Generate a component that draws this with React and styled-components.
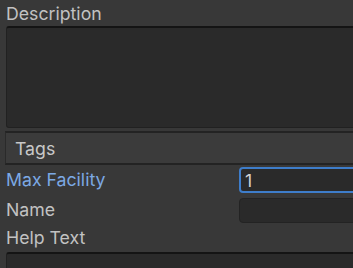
import React from "react";
import styled, { createGlobalStyle } from "styled-components";

const GlobalStyle = createGlobalStyle`
  html, body {
    margin: 0;
    padding: 0;
    background: #383838;
    overflow: hidden;
  }
  body {
    font-family: Inter, "Noto Sans", sans-serif;
  }
`;

const Panel = styled.div`
  width: 353px;
  height: 268px;
  padding: 4px 0 0 6px;
  box-sizing: border-box;
  background: #383838;
  display: flex;
  flex-direction: column;
  overflow: hidden;

  & > * {
    flex-shrink: 0;
  }
`;

const Label = styled.div`
  font-size: 17.7px;
  line-height: 20px;
  color: ${(p) => (p.$active ? "#7ca9e4" : "#c2c2c2")};
  white-space: nowrap;
`;

const TextArea = styled.div`
  margin-top: 2px;
  margin-right: -10px;
  height: ${(p) => p.$h}px;
  background: #2a2a2a;
  border: 1px solid #212121;
  border-top: 2px solid #141414;
  border-radius: 3px;
  box-sizing: border-box;
`;

const Foldout = styled.div`
  margin: 3px -10px 0 -1px;
  height: 34px;
  display: flex;
  align-items: center;
  padding-left: 9px;
  background: #3b3b3b;
  border-top: 2px solid #232323;
  border-bottom: 2px solid #232323;
  border-left: 1px solid #2a2a2a;
  box-sizing: border-box;
  font-size: 17.7px;
  color: #c8c8c8;
`;

const Row = styled.div`
  display: grid;
  grid-template-columns: 233px 1fr;
  align-items: center;
  height: ${(p) => p.$h || 30}px;
  margin-right: -10px;
`;

const Field = styled.div`
  height: ${(p) => (p.$focused ? 26 : 25)}px;
  box-sizing: border-box;
  background: #2a2a2a;
  border: ${(p) => (p.$focused ? "2px solid #3e7dca" : "1px solid #232323")};
  border-radius: 4px;
  display: flex;
  align-items: center;
  padding-left: 4px;
  font-size: 17.7px;
  color: #d2d2d2;
`;

export default function App() {
  return (
    <>
      <GlobalStyle />
      <Panel>
        <Label>Description</Label>
        <TextArea $h={102} />
        <Foldout>Tags</Foldout>
        <Row>
          <Label $active>Max Facility</Label>
          <Field $focused>1</Field>
        </Row>
        <Row>
          <Label>Name</Label>
          <Field />
        </Row>
        <Row $h={25}>
          <Label>Help Text</Label>
        </Row>
        <TextArea $h={40} />
      </Panel>
    </>
  );
}
